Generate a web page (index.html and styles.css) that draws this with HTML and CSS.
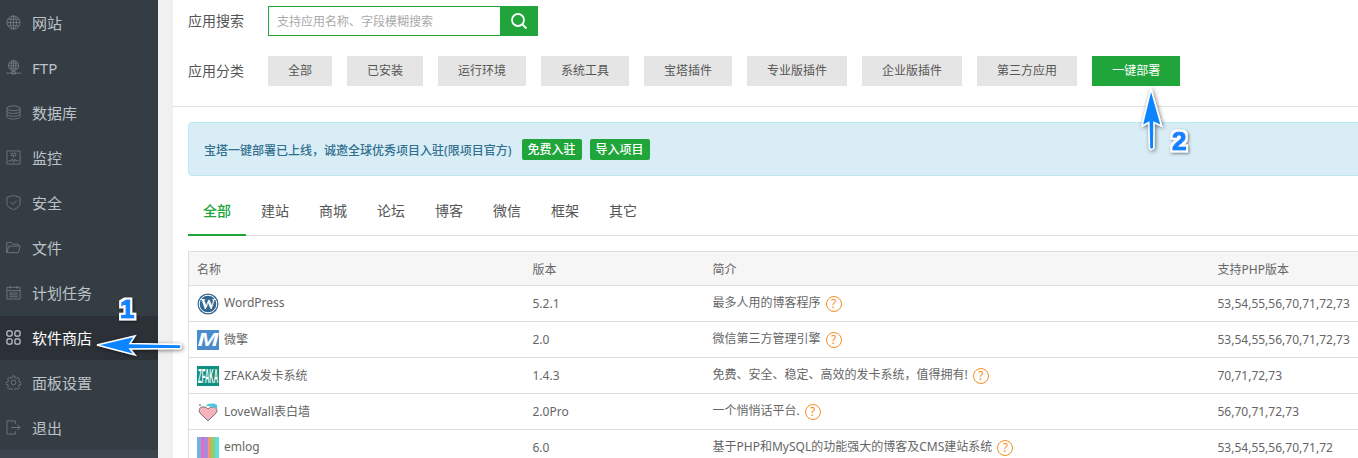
FILE: index.html
```html
<!DOCTYPE html>
<html>
<head>
    <title>软件商店</title>
    <link rel="stylesheet" href="styles.css">
</head>
<body>
    <div class="page">
        <div class="sidebar">
            <a class="side-item">
                <svg class="side-icon" viewBox="0 0 16 16"><circle cx="8" cy="8" r="7"/><ellipse cx="8" cy="8" rx="3.2" ry="7"/><path d="M8 1v14M1 8h14M2 4.500h12M2 11.500h12"/></svg>
                <span>网站</span>
            </a>
            <a class="side-item">
                <svg class="side-icon" viewBox="0 0 16 16"><circle cx="8" cy="6" r="5.500"/><ellipse cx="8" cy="6" rx="2.500" ry="5.500"/><path d="M8 .5v11M2.500 6h11M3.300 3.300h9.400M3.300 8.700h9.400M0 14h16M6 12.500h4v2.500h-4z"/></svg>
                <span>FTP</span>
            </a>
            <a class="side-item">
                <svg class="side-icon" viewBox="0 0 16 16"><ellipse cx="8" cy="3.500" rx="7" ry="2.500"/><path d="M1 3.500v9c0 1.400 3.100 2.500 7 2.500s7-1.100 7-2.500v-9M1 6.500c0 1.400 3.100 2.500 7 2.500s7-1.100 7-2.500M1 9.500c0 1.400 3.100 2.500 7 2.500s7-1.100 7-2.500"/></svg>
                <span>数据库</span>
            </a>
            <a class="side-item">
                <svg class="side-icon" viewBox="0 0 16 16"><path d="M1 1h14v14h-14zM2.500 11.500h3l1.200-2 1.300 3.500 1.300-3.500 1 2h3.200M5.500 3.500h5v2.500h-5zM8 6v2"/></svg>
                <span>监控</span>
            </a>
            <a class="side-item">
                <svg class="side-icon" viewBox="0 0 16 16"><path d="M8 .5l7 2v6.500c0 3-3.500 5.500-7 6.500-3.500-1-7-3.500-7-6.500v-6.500zM4.800 7.500l2.500 2.500 4-4"/></svg>
                <span>安全</span>
            </a>
            <a class="side-item">
                <svg class="side-icon" viewBox="0 0 16 16"><path d="M.8 13.500v-11h5l1.500 2h6v2M.8 13.500l2.200-7h12.200l-2 7z"/></svg>
                <span>文件</span>
            </a>
            <a class="side-item">
                <svg class="side-icon" viewBox="0 0 16 16"><path d="M1 2.500h14v12.500h-14zM1 6h14M4.500 .8v3M11.500 .8v3M3.500 8.500h9M3.500 10.500h9M3.500 12.500h9"/></svg>
                <span>计划任务</span>
            </a>
            <a class="side-item active">
                <svg class="side-icon" viewBox="0 0 16 16"><rect x="1" y="1" width="5.500" height="5.500" rx="1.500"/><rect x="9.500" y="1" width="5.500" height="5.500" rx="1.500"/><rect x="1" y="9.500" width="5.500" height="5.500" rx="1.500"/><rect x="9.500" y="9.500" width="5.500" height="5.500" rx="1.500"/></svg>
                <span>软件商店</span>
            </a>
            <a class="side-item">
                <svg class="side-icon" viewBox="0 0 16 16"><circle cx="8" cy="8" r="2.500"/><path d="M6.800 1h2.400l.4 2 1.400.6 1.700-1.100 1.700 1.700-1.100 1.700.6 1.400 2 .4v2.400l-2 .4-.6 1.400 1.100 1.700-1.700 1.700-1.700-1.100-1.400.6-.4 2h-2.400l-.4-2-1.400-.6-1.700 1.100-1.700-1.700 1.100-1.700-.6-1.400-2-.4v-2.400l2-.4.6-1.400-1.100-1.700 1.700-1.700 1.700 1.100 1.400-.6z"/></svg>
                <span>面板设置</span>
            </a>
            <a class="side-item">
                <svg class="side-icon" viewBox="0 0 16 16"><path d="M10 4v-3h-9v14h9v-3M5.500 8h9.500M12 5l3 3-3 3"/></svg>
                <span>退出</span>
            </a>
            <div class="side-foot"></div>
        </div>

        <div class="main">
            <div class="filters">
                <div class="filter-row">
                    <span class="filter-label">应用搜索</span>
                    <div class="search">
                        <input class="search-input" type="text" placeholder="支持应用名称、字段模糊搜索">
                        <button class="search-btn">
                            <svg viewBox="0 0 18 18" width="18" height="18"><circle cx="8" cy="8" r="6"/><path d="M12.500 12.500l4 4"/></svg>
                        </button>
                    </div>
                </div>
                <div class="filter-row">
                    <span class="filter-label">应用分类</span>
                    <div class="cats">
                        <span class="cat">全部</span>
                        <span class="cat">已安装</span>
                        <span class="cat">运行环境</span>
                        <span class="cat">系统工具</span>
                        <span class="cat">宝塔插件</span>
                        <span class="cat">专业版插件</span>
                        <span class="cat">企业版插件</span>
                        <span class="cat">第三方应用</span>
                        <span class="cat cat-on">一键部署</span>
                    </div>
                </div>
            </div>

            <div class="content">
                <div class="notice">
                    <b>宝塔一键部署已上线&#xFF0C;诚邀全球优秀项目入驻(限项目官方)</b>
                    <span class="notice-btn">免费入驻</span>
                    <span class="notice-btn">导入项目</span>
                </div>

                <div class="tabs">
                    <span class="tab tab-on">全部</span>
                    <span class="tab">建站</span>
                    <span class="tab">商城</span>
                    <span class="tab">论坛</span>
                    <span class="tab">博客</span>
                    <span class="tab">微信</span>
                    <span class="tab">框架</span>
                    <span class="tab">其它</span>
                </div>

                <table class="apps">
                    <colgroup>
                        <col class="col-name">
                        <col class="col-ver">
                        <col class="col-desc">
                        <col class="col-php">
                    </colgroup>
                    <thead>
                        <tr><th>名称</th><th>版本</th><th>简介</th><th>支持PHP版本</th></tr>
                    </thead>
                    <tbody>
                        <tr>
                            <td><div class="app-name">
                                <svg class="logo" viewBox="0 0 22 22"><circle cx="11" cy="11" r="10.500" fill="#34678f"/><circle cx="11" cy="11" r="8.800" fill="none" stroke="#fff" stroke-width="1"/><text x="11" y="16" text-anchor="middle" class="logo-w">W</text></svg>
                                WordPress
                            </div></td>
                            <td>5.2.1</td>
                            <td>最多人用的博客程序<span class="tip">?</span></td>
                            <td>53,54,55,56,70,71,72,73</td>
                        </tr>
                        <tr>
                            <td><div class="app-name">
                                <svg class="logo" viewBox="0 0 22 22"><rect width="22" height="20" y="1" fill="#4a8ccb"/><text x="8.460" y="17" text-anchor="middle" transform="scale(1.300 1)" class="logo-m">M</text></svg>
                                微擎
                            </div></td>
                            <td>2.0</td>
                            <td>微信第三方管理引擎<span class="tip">?</span></td>
                            <td>53,54,55,56,70,71,72,73</td>
                        </tr>
                        <tr>
                            <td><div class="app-name">
                                <svg class="logo" viewBox="0 0 22 22"><rect width="22" height="20" y="1" fill="#0f8f80"/><text x="11" y="5.300" text-anchor="middle" transform="scale(1 3.400)" class="logo-z">ZFAKA</text></svg>
                                ZFAKA发卡系统
                            </div></td>
                            <td>1.4.3</td>
                            <td>免费、安全、稳定、高效的发卡系统&#xFF0C;值得拥有!<span class="tip">?</span></td>
                            <td>70,71,72,73</td>
                        </tr>
                        <tr>
                            <td><div class="app-name">
                                <svg class="logo" viewBox="0 0 22 22"><path d="M11 20l-8-8c-2-3 0-7 4-6 2 0 3 1 4 2 1-1 3-2 5-2 4 0 5 4 3 6z" fill="#f7b3bd" stroke="#555" stroke-width=".8"/><path d="M9 5c2-3 8-3 11-1v4c-3-2-7-3-11-3z" fill="#4cc6dc"/><circle cx="3" cy="4" r="1" fill="#888"/></svg>
                                LoveWall表白墙
                            </div></td>
                            <td>2.0Pro</td>
                            <td>一个悄悄话平台.<span class="tip">?</span></td>
                            <td>56,70,71,72,73</td>
                        </tr>
                        <tr>
                            <td><div class="app-name">
                                <svg class="logo" viewBox="0 0 22 22"><rect width="4" height="22" fill="#6fb1e8"/><rect x="4" width="3" height="22" fill="#e46bc0"/><rect x="7" width="4" height="22" fill="#a58be0"/><rect x="11" width="3" height="22" fill="#f09a6b"/><rect x="14" width="4" height="22" fill="#8fd06e"/><rect x="18" width="4" height="22" fill="#5fdcdc"/></svg>
                                emlog
                            </div></td>
                            <td>6.0</td>
                            <td>基于PHP和MySQL的功能强大的博客及CMS建站系统<span class="tip">?</span></td>
                            <td>53,54,55,56,70,71,72</td>
                        </tr>
                    </tbody>
                </table>
            </div>
        </div>

        <svg class="marks" width="1358" height="458" viewBox="0 0 1358 458">
            <defs>
                <filter id="shade" x="-30%" y="-30%" width="160%" height="160%">
                    <feDropShadow dx="1" dy="1" stdDeviation="2" flood-color="#000" flood-opacity=".55"/>
                </filter>
                <filter id="outline" x="-50%" y="-50%" width="200%" height="200%">
                    <feMorphology in="SourceAlpha" operator="dilate" radius="2" result="fat"/>
                    <feFlood flood-color="#fff"/>
                    <feComposite in2="fat" operator="in" result="edge"/>
                    <feDropShadow in="edge" dx="1" dy="1" stdDeviation="1.500" flood-color="#000" flood-opacity=".55" result="edged"/>
                    <feMerge>
                        <feMergeNode in="edged"/>
                        <feMergeNode in="SourceGraphic"/>
                    </feMerge>
                </filter>
            </defs>
            <path class="arrow" d="M97 345L135 336L130 343.500L180 344.500Q182.500 346.500 180 348.500L130 349L135 355Z"/>
            <path class="arrow" d="M1151 89L1161.500 126L1154 122.500L1153.800 148Q1151.500 151 1149.500 148L1148.800 122.500L1142 126Z"/>
            <text class="mark-num" x="120" y="318">1</text>
            <text class="mark-num" x="1172" y="150">2</text>
        </svg>
    </div>
</body>
</html>
```

FILE: styles.css
```css
* {
    margin: 0;
    padding: 0;
    box-sizing: border-box;
}

body {
    font-family: "Noto Sans", "Noto Sans CJK SC", sans-serif;
    font-size: 12px;
    color: #666;
    background-color: #f0f0f0;
    overflow: hidden;
}

.page {
    position: relative;
    display: flex;
    width: 1358px;
    height: 458px;
    overflow: hidden;
}

.sidebar {
    display: flex;
    flex-direction: column;
    flex: none;
    width: 158px;
    background-color: #353d44;
}

.side-item {
    display: flex;
    flex: none;
    align-items: center;
    gap: 11px;
    height: 45px;
    padding-left: 6px;
    font-size: 15px;
    color: #bcc2c8;
}

.side-item.active {
    background: linear-gradient(#353d44 1px, #2c3138 1px);
    color: #fff;
}

.side-foot {
    flex: 1;
    background-color: #3c454d;
}

.side-icon {
    flex: none;
    width: 15px;
    height: 15px;
    fill: none;
    stroke: #6f767c;
    stroke-width: 1;
}

.active .side-icon {
    stroke: #c8ccd0;
    stroke-width: 1.300;
}

.main {
    flex: none;
    width: 1300px;
    margin-left: 15px;
    background-color: #fff;
}

.filters {
    height: 107px;
    padding: 6px 15px 0;
    border-bottom: 1px solid #e0e0e0;
}

.filter-row {
    display: flex;
    align-items: center;
    height: 30px;
    margin-bottom: 20px;
}

.filter-label {
    width: 80px;
    padding-bottom: 2px;
    font-size: 14px;
    color: #555;
}

.search {
    display: flex;
    height: 30px;
}

.search-input {
    width: 232px;
    height: 30px;
    padding: 0 8px;
    border: 1px solid #20a53a;
    border-right: none;
    outline: none;
    font-family: inherit;
    font-size: 12px;
}

.search-input::placeholder {
    color: #aaa;
}

.search-btn {
    display: flex;
    align-items: center;
    justify-content: center;
    width: 38px;
    height: 30px;
    border: none;
    background-color: #20a53a;
}

.search-btn svg {
    fill: none;
    stroke: #fff;
    stroke-width: 1.800;
}

.cats {
    display: flex;
    gap: 15px;
}

.cat {
    height: 30px;
    padding: 0 20px;
    line-height: 30px;
    background-color: #e5e5e5;
    color: #555;
    white-space: nowrap;
}

.cat-on {
    background-color: #20a53a;
    color: #fff;
}

.content {
    padding: 15px 15px 0;
}

.notice {
    display: flex;
    align-items: center;
    height: 54px;
    padding-left: 15px;
    background-color: #d9edf7;
    border: 1px solid #bce8f1;
    border-radius: 4px;
    color: #31708f;
}

.notice b {
    margin-right: 10px;
    padding-top: 2px;
    font-weight: 500;
}

.notice-btn {
    height: 21px;
    margin-right: 8px;
    padding: 0 6px;
    line-height: 21px;
    border-radius: 2px;
    background-color: #20a53a;
    color: #fff;
    font-weight: 500;
}

.tabs {
    display: flex;
    height: 60px;
    margin-bottom: 15px;
    border-bottom: 1px solid #ddd;
}

.tab {
    height: 60px;
    padding: 0 15px;
    line-height: 70px;
    font-size: 14px;
    color: #555;
}

.tab-on {
    color: #20a53a;
    border-bottom: 2px solid #20a53a;
    font-weight: 500;
}

.apps {
    width: 100%;
    table-layout: fixed;
    border-collapse: collapse;
    border-left: 1px solid #ddd;
    border-top: 1px solid #ddd;
}

.col-name {
    width: 336px;
}

.col-ver {
    width: 180px;
}

.col-desc {
    width: 505px;
}

.apps th {
    height: 34px;
    padding: 0 8px;
    background-color: #f6f6f6;
    border-bottom: 1px solid #ddd;
    font-weight: 400;
    text-align: left;
}

.apps td {
    height: 36px;
    padding: 0 8px;
    border-bottom: 1px solid #ddd;
    white-space: nowrap;
}

.apps td:nth-child(1),
.apps td:nth-child(3) {
    padding-bottom: 2px;
}

.app-name {
    display: flex;
    align-items: center;
    gap: 5px;
}

.logo {
    flex: none;
    width: 22px;
    height: 22px;
    margin-top: 2px;
}

.logo-w {
    font: 700 15px "Liberation Serif", serif;
    fill: #fff;
}

.logo-m {
    font: italic 700 19px "Liberation Sans", sans-serif;
    fill: #fff;
}

.logo-z {
    font: 700 6px "Liberation Sans", sans-serif;
    fill: #fff;
}

.tip {
    display: inline-block;
    width: 16px;
    height: 16px;
    margin-left: 5px;
    border: 1px solid #f98d24;
    border-radius: 50%;
    line-height: 14px;
    text-align: center;
    vertical-align: middle;
    color: #f98d24;
}

.marks {
    position: absolute;
    top: 0;
    left: 0;
    pointer-events: none;
}

.arrow {
    fill: #0a84ff;
    stroke: #fff;
    stroke-width: 1.500;
    filter: url(#shade);
}

.mark-num {
    font: 700 26px "Liberation Sans", sans-serif;
    fill: #0a84ff;
    stroke: #0a84ff;
    stroke-width: 1.200;
    filter: url(#outline);
}
```
